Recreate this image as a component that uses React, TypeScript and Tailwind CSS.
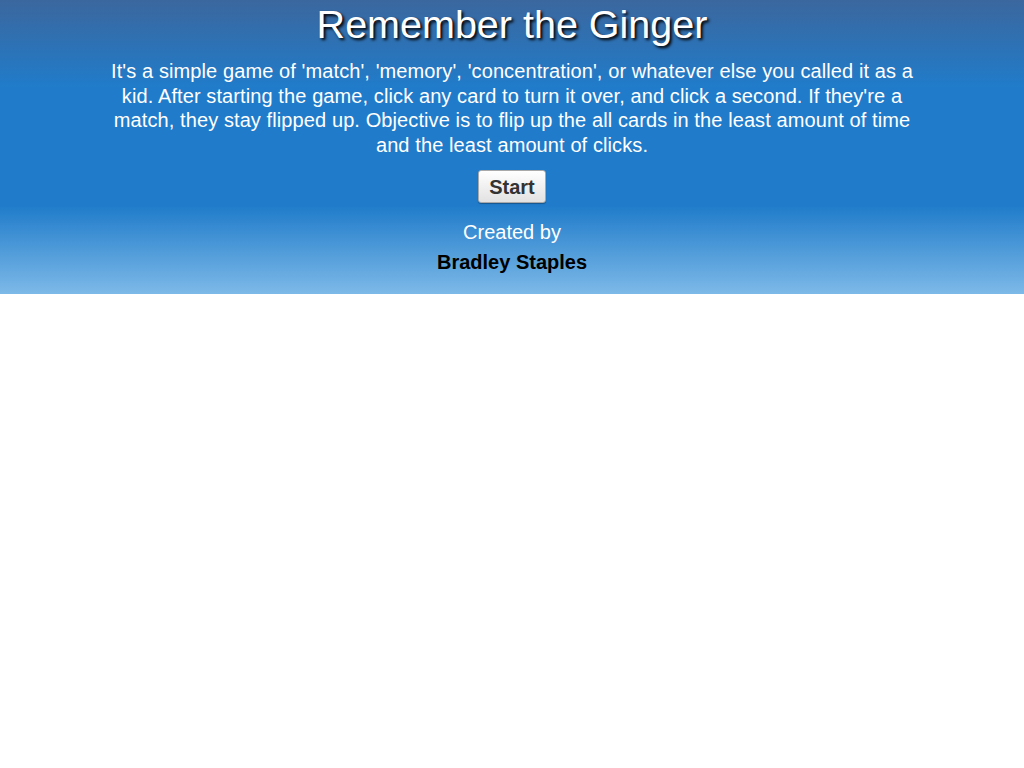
import React from "react";

export default function App() {
  return (
    <div className="min-h-screen bg-white font-['Liberation_Sans',Arial,sans-serif]">
      {/* Header */}
      <header className="h-[294px] bg-[linear-gradient(to_bottom,#3b679e_0%,#207cca_30%,#207cca_70%,#7db9e8_100%)] flex flex-col items-center text-center">
        <h1 className="mt-[2px] text-[39.5px] leading-[44px] text-white [text-shadow:2px_2px_3px_#000]">
          Remember the Ginger
        </h1>
        <p className="mt-[13px] w-[810px] text-[20px] tracking-[0.1px] leading-[24.5px] text-white">
          It's a simple game of 'match', 'memory', 'concentration', or whatever else you called it as a kid.
          After starting the game, click any card to turn it over, and click a second. If they're a match,
          they stay flipped up. Objective is to flip up the all cards in the least amount of time and the
          least amount of clicks.
        </p>
        <button className="mt-[13px] h-[33px] px-[10px] rounded-[3px] border border-[#a9a9a9] bg-[linear-gradient(to_bottom,#ffffff,#e2e2e2)] text-[20px] leading-[24px] font-bold text-[#333] shadow-[0_1px_1px_rgba(0,0,0,0.3)]">
          Start
        </button>
        <div className="mt-[17px] text-[20px] leading-[24px] text-white">Created by</div>
        <div className="mt-[6px] text-[20px] leading-[24px] font-bold text-black">Bradley Staples</div>
      </header>
    </div>
  );
}
